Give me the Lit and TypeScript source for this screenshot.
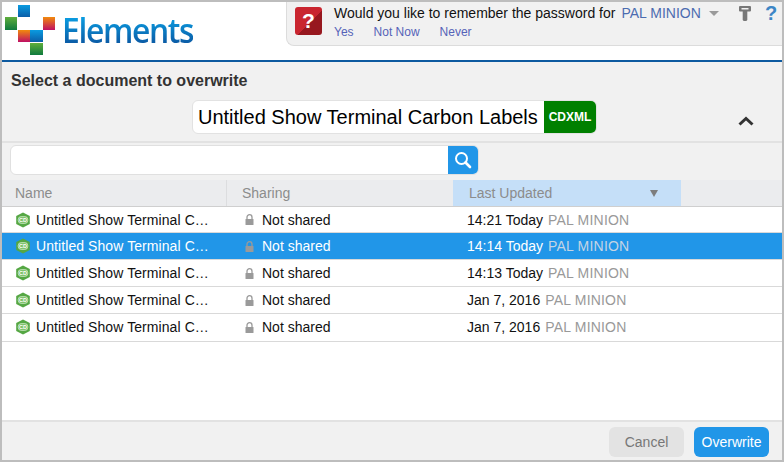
import { LitElement, html, css, svg } from 'lit';
import { customElement } from 'lit/decorators.js';
import { classMap } from 'lit/directives/class-map.js';

type Doc = { when: string; selected?: boolean };

const docs: Doc[] = [
  { when: '14:21 Today' },
  { when: '14:14 Today', selected: true },
  { when: '14:13 Today' },
  { when: 'Jan 7, 2016' },
  { when: 'Jan 7, 2016' },
];

const logo = svg`
  <svg width="52" height="52" viewBox="0 0 52 52">
    <defs>
      <linearGradient id="b" x1="0" y1="0" x2="0" y2="1"><stop offset="0" stop-color="#0a9be0"/><stop offset="1" stop-color="#0b5ea8"/></linearGradient>
      <linearGradient id="g" x1="0" y1="0" x2="0" y2="1"><stop offset="0" stop-color="#5fae3c"/><stop offset="1" stop-color="#0f7a3e"/></linearGradient>
      <linearGradient id="o" x1="0" y1="0" x2="0" y2="1"><stop offset="0" stop-color="#f18a0c"/><stop offset="1" stop-color="#bf0f63"/></linearGradient>
    </defs>
    <rect x="13" y="0" width="12" height="12" fill="url(#b)"/>
    <rect x="0" y="12" width="12" height="13" fill="url(#g)"/>
    <rect x="38" y="12" width="12" height="13" fill="url(#o)"/>
    <rect x="13" y="25" width="12" height="12" fill="url(#o)"/>
    <rect x="25" y="25" width="13" height="12" fill="url(#b)"/>
    <rect x="25" y="38" width="13" height="12" fill="url(#g)"/>
  </svg>`;

const docIcon = html`
  <svg class="doc-icon" width="16" height="16" viewBox="0 0 16 16">
    <polygon points="8,0.5 14.8,4 14.8,12 8,15.5 1.2,12 1.2,4" fill="#55a744"/>
    <rect x="3.2" y="4.6" width="9.6" height="6.8" rx="3" fill="#7cc068" stroke="#dff0d8" stroke-width="0.7"/>
    <text x="8" y="10" text-anchor="middle" font-size="5.5" font-weight="700" fill="#fff" font-family="Liberation Sans, sans-serif">CD</text>
  </svg>`;

const lockIcon = html`
  <svg width="9" height="11" viewBox="0 0 9 11">
    <path d="M2 5V3.2a2.5 2.5 0 0 1 5 0V5" fill="none" stroke="#9a9a9a" stroke-width="1.3"/>
    <rect x="0.5" y="5" width="8" height="6" rx="0.5" fill="#9a9a9a"/>
  </svg>`;

@customElement('app-root')
export class AppRoot extends LitElement {
  static styles = css`
    :host {
      display: block;
      box-sizing: border-box;
      width: 784px;
      height: 462px;
      border: 2px solid #bdbdbd;
      background: #f1f1f1;
      font-family: 'Liberation Sans', Arial, sans-serif;
      overflow: hidden;
    }

    .frame {
      display: flex;
      flex-direction: column;
      height: 458px;
    }

    .top {
      display: flex;
      height: 58px;
      background: #fff;
      border-bottom: 2px solid #0d5aa0;
      justify-content: space-between;
    }

    .brand {
      display: flex;
      align-items: flex-start;
      padding: 3px 0 0 3px;
      gap: 5px;
    }

    .wordmark {
      font-family: 'Open Sans', sans-serif;
      font-weight: 600;
      font-size: 35px;
      line-height: 48px;
      margin-top: 1px;
      letter-spacing: -1.5px;
      transform: scaleX(0.91);
      transform-origin: left center;
      background: linear-gradient(#0a9be0 25%, #0b5ea8 75%);
      -webkit-background-clip: text;
      background-clip: text;
      color: transparent;
    }

    .prompt {
      box-sizing: border-box;
      width: 496px;
      height: 44px;
      background: #f1f1f1;
      border: 1px solid #dcdcdc;
      border-width: 0 0 1px 1px;
      border-bottom-left-radius: 8px;
      display: flex;
      padding: 3px 0 0 8px;
    }

    .question {
      width: 27px;
      height: 28px;
      border-radius: 3px;
      background: linear-gradient(135deg, #c9252f 55%, #97181f 55%);
      color: #fff;
      font-weight: 700;
      font-size: 21px;
      line-height: 28px;
      text-align: center;
      margin: 2px 12px 0 0;
    }

    .prompt-body {
      font-size: 14px;
      color: #111;
      line-height: 16px;
      width: 390px;
      flex: none;
    }

    .prompt-line {
      display: flex;
      align-items: center;
    }

    .user {
      color: #4c6cb0;
      margin-left: 6px;
    }

    .caret {
      width: 0;
      height: 0;
      border: 5px solid transparent;
      border-top: 5px solid #9a9a9a;
      border-bottom-width: 0;
      margin-left: 8px;
    }

    .answers {
      display: flex;
      gap: 20px;
      font-size: 12px;
      color: #5563b8;
      margin-top: 3px;
    }

    .tools {
      display: flex;
      align-items: flex-start;
      gap: 14px;
      margin-left: 15px;
    }

    .key {
      margin-top: 1px;
    }

    .help {
      font-size: 20px;
      font-weight: 700;
      line-height: 18px;
      margin-top: -1px;
      color: #3d86c6;
    }

    .title {
      font-size: 16px;
      font-weight: 700;
      color: #333;
      padding: 10px 0 0 9px;
      line-height: 18px;
    }

    .doc-row {
      display: flex;
      margin-top: 10px;
      height: 34px;
      padding-left: 190px;
      position: relative;
    }

    .doc-name {
      box-sizing: border-box;
      width: 405px;
      height: 34px;
      background: #fff;
      border: 1px solid #e2e2e2;
      border-radius: 6px;
      display: flex;
      justify-content: space-between;
      align-items: center;
      padding: 0 0 0 5px;
      font-size: 20px;
      color: #000;
      white-space: nowrap;
    }

    .doc-type {
      width: 52px;
      height: 32px;
      background: #008000;
      color: #fff;
      font-size: 12px;
      font-weight: 700;
      display: flex;
      align-items: center;
      justify-content: center;
      border-radius: 0 5px 5px 0;
    }

    .collapse {
      position: absolute;
      right: 28px;
      top: 16px;
    }

    .rule {
      height: 2px;
      background: #e2e2e2;
      margin-top: 7px;
    }

    .search {
      display: flex;
      box-sizing: border-box;
      width: 469px;
      height: 30px;
      margin: 2px 0 0 8px;
      background: #fff;
      border: 1px solid #e0e0e0;
      border-radius: 6px;
      justify-content: flex-end;
      overflow: hidden;
    }

    .search-btn {
      width: 30px;
      height: 28px;
      background: #2196e8;
      display: flex;
      align-items: center;
      justify-content: center;
    }

    .table {
      flex: 1;
      background: #fff;
      margin-top: 5px;
      border-bottom: 2px solid #e2e2e2;
    }

    .cols {
      display: grid;
      grid-template-columns: 225px 226px 228px 1fr;
    }

    .head {
      height: 26px;
      background: #ebecee;
      border-bottom: 1px solid #cfcfcf;
      font-size: 14px;
      color: #8c8c8c;
      line-height: 26px;
    }

    .head > div {
      padding-left: 13px;
      border-right: 1px solid #dcdddf;
    }

    .head > div:nth-child(2) {
      padding-left: 15px;
      border-right: 0;
    }

    .head .sorted {
      background: #c5dff8;
      padding-left: 16px;
      padding-right: 23px;
      border-right: 0;
      display: flex;
      justify-content: space-between;
      align-items: center;
    }

    .head > div:last-child {
      border-right: 0;
    }

    .sort-caret {
      width: 0;
      height: 0;
      border: 4px solid transparent;
      border-top: 7px solid #7d7d7d;
      border-bottom-width: 0;
    }

    .row {
      height: 26px;
      border-bottom: 1px solid #d9d9d9;
      font-size: 14px;
      color: #111;
      line-height: 26px;
      white-space: nowrap;
    }

    .head + .row {
      height: 25px;
    }

    .row:last-child {
      padding-bottom: 1px;
    }

    .row.selected {
      background: #2196e8;
      color: #fff;
    }

    .cell {
      display: flex;
      align-items: center;
      overflow: hidden;
    }

    .cell.name {
      padding-left: 13px;
      gap: 5px;
    }

    .clip {
      letter-spacing: 0.08px;
    }

    .cell.share {
      padding-left: 18px;
      gap: 8px;
    }

    .cell.updated {
      padding-left: 14px;
      gap: 5px;
    }

    .owner {
      color: #999;
      letter-spacing: 0.2px;
    }

    .row.selected .owner {
      color: #c4d4e4;
    }

    .foot {
      box-sizing: border-box;
      height: 38px;
      display: flex;
      justify-content: flex-end;
      align-items: flex-start;
      gap: 10px;
      padding: 5px 13px 0 0;
    }

    button {
      height: 30px;
      border: 0;
      border-radius: 6px;
      font: 14px 'Liberation Sans', Arial, sans-serif;
      padding: 0;
    }

    .cancel {
      width: 75px;
      background: #e3e3e3;
      color: #777;
    }

    .ok {
      width: 75px;
      background: #2196e8;
      color: #fff;
    }
  `;

  render() {
    return html`
      <div class="frame">
        <div class="top">
          <div class="brand">
            ${logo}
            <div class="wordmark">Elements</div>
          </div>
          <div class="prompt">
            <div class="question">?</div>
            <div class="prompt-body">
              <div class="prompt-line">
                Would you like to remember the password for
                <span class="user">PAL MINION</span><span class="caret"></span>
              </div>
              <div class="answers"><span>Yes</span><span>Not Now</span><span>Never</span></div>
            </div>
            <div class="tools">
              <svg class="key" width="12" height="15" viewBox="0 0 12 15">
                <path fill-rule="evenodd" d="M1 0h10a1 1 0 0 1 1 1v3.5a1 1 0 0 1-1 1H8.3V14l-1 1H4.7l-1-1V5.5H1a1 1 0 0 1-1-1V1a1 1 0 0 1 1-1zM2.5 2v1.5h7V2z" fill="#777"/>
              </svg>
              <span class="help">?</span>
            </div>
          </div>
        </div>

        <div class="title">Select a document to overwrite</div>

        <div class="doc-row">
          <div class="doc-name">
            <span>Untitled Show Terminal Carbon Labels</span>
            <span class="doc-type">CDXML</span>
          </div>
          <svg class="collapse" width="16" height="10" viewBox="0 0 16 10">
            <path d="M1.5 8.5L8 2.5l6.5 6" fill="none" stroke="#333" stroke-width="3"/>
          </svg>
        </div>

        <div class="rule"></div>

        <div class="search">
          <div class="search-btn">
            <svg width="18" height="18" viewBox="0 0 18 18">
              <circle cx="7.5" cy="7.5" r="5.5" fill="none" stroke="#fff" stroke-width="2"/>
              <path d="M11.5 11.5L16 16" stroke="#fff" stroke-width="2.6" stroke-linecap="round"/>
            </svg>
          </div>
        </div>

        <div class="table">
          <div class="cols head">
            <div>Name</div>
            <div>Sharing</div>
            <div class="sorted"><span>Last Updated</span><span class="sort-caret"></span></div>
            <div></div>
          </div>
          ${docs.map(
            (d) => html`
              <div class=${classMap({ cols: true, row: true, selected: !!d.selected })}>
                <div class="cell name">${docIcon}<span class="clip">Untitled Show Terminal C…</span></div>
                <div class="cell share">${lockIcon}<span>Not shared</span></div>
                <div class="cell updated"><span>${d.when}</span><span class="owner">PAL MINION</span></div>
                <div></div>
              </div>
            `
          )}
        </div>

        <div class="foot">
          <button class="cancel">Cancel</button>
          <button class="ok">Overwrite</button>
        </div>
      </div>
    `;
  }
}
